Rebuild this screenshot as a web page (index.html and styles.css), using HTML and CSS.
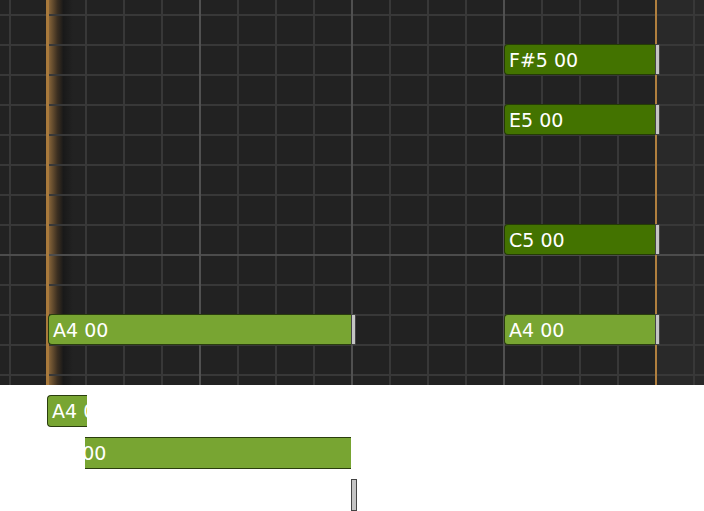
FILE: index.html
```html
<!DOCTYPE html>
<html lang="en">
<head>
    <meta charset="UTF-8">
    <meta name="viewport" content="width=device-width, initial-scale=1.0">
    <title>Piano Roll</title>
    <link rel="stylesheet" href="styles.css">
</head>
<body>
    <div class="roll">
        <div class="playhead"></div>
        <div class="loop-end"></div>

        <div class="note dark" style="left:504px; top:44px; width:156px;">
            <div class="note-body">F#5 00</div>
            <div class="note-handle"></div>
        </div>
        <div class="note dark" style="left:504px; top:104px; width:156px;">
            <div class="note-body">E5 00</div>
            <div class="note-handle"></div>
        </div>
        <div class="note dark" style="left:504px; top:224px; width:156px;">
            <div class="note-body">C5 00</div>
            <div class="note-handle"></div>
        </div>
        <div class="note" style="left:48px; top:314px; width:308px;">
            <div class="note-body">A4 00</div>
            <div class="note-handle"></div>
        </div>
        <div class="note" style="left:504px; top:314px; width:156px;">
            <div class="note-body">A4 00</div>
            <div class="note-handle"></div>
        </div>
    </div>

    <!-- drag preview, split into its three slices -->
    <div class="ghost">
        <div class="ghost-cap"><span>A4 00</span></div>
        <div class="ghost-mid"><span>A4 00</span></div>
        <div class="ghost-handle"></div>
    </div>
</body>
</html>
```

FILE: styles.css
```css
body {
    margin: 0;
    background: #ffffff;
    font-family: "DejaVu Sans", Verdana, sans-serif;
}

.roll {
    position: relative;
    height: 385px;
    overflow: hidden;
    background-color: #222222;
    background-image:
        /* major bar lines */
        repeating-linear-gradient(to right, #505050 0 2px, transparent 2px 152px),
        /* octave line */
        linear-gradient(to bottom, transparent 254px, #4c4c4c 254px 256px, transparent 256px),
        /* beat lines */
        repeating-linear-gradient(to right, #383838 0 2px, transparent 2px 38px),
        /* row lines */
        repeating-linear-gradient(to bottom, #383838 0 2px, transparent 2px 30px),
        /* playhead shadow */
        linear-gradient(to right, rgba(150, 110, 60, 0.85), rgba(70, 52, 32, 0.7) 35%, rgba(22, 22, 22, 0.75) 60%, rgba(26, 26, 26, 0)),
        /* past loop end */
        linear-gradient(to right, transparent 657px, #292929 657px);
    background-size:
        100% 100%,
        100% 100%,
        100% 100%,
        100% 100%,
        24px 100%,
        100% 100%;
    background-position:
        47px 0,
        0 0,
        9px 0,
        0 14px,
        49px 0,
        0 0;
    background-repeat:
        repeat-x,
        no-repeat,
        repeat-x,
        repeat-y,
        no-repeat,
        no-repeat;
}

.playhead {
    position: absolute;
    left: 46px;
    top: 0;
    bottom: 0;
    width: 3px;
    background: #a97a3c;
}

.loop-end {
    position: absolute;
    left: 655px;
    top: 0;
    bottom: 0;
    width: 2px;
    background: #b07f3e;
}

.note {
    position: absolute;
    display: flex;
    height: 31px;
}

.note-body {
    flex: 1;
    box-sizing: border-box;
    padding-left: 4px;
    border: 1px solid #2a3d0e;
    border-right: none;
    border-radius: 4px 0 0 4px;
    background: #78a532;
    color: #ffffff;
    font-size: 19px;
    line-height: 31px;
    white-space: nowrap;
    overflow: hidden;
}

.note.dark .note-body {
    background: #437300;
    border-color: #253c05;
}

.note-handle {
    width: 5px;
    box-sizing: border-box;
    border: 1px solid #444444;
    background: #c4c4c4;
}

.ghost {
    display: flex;
    flex-direction: column;
    gap: 10px;
    padding-top: 10px;
}

.ghost-cap,
.ghost-mid {
    box-sizing: border-box;
    height: 32px;
    overflow: hidden;
    background: #78a532;
    color: #ffffff;
    font-size: 19px;
    line-height: 31px;
    white-space: nowrap;
    border: 1px solid #2a3d0e;
}

.ghost-cap {
    margin-left: 47px;
    width: 40px;
    padding-left: 4px;
    border-right: none;
    border-radius: 4px 0 0 4px;
}

.ghost-mid {
    margin-left: 85px;
    width: 266px;
    border-left: none;
    border-right: none;
}

.ghost-mid span {
    margin-left: -34px;
}

.ghost-handle {
    margin-left: 351px;
    width: 6px;
    height: 32px;
    box-sizing: border-box;
    border: 1px solid #444444;
    background: #c4c4c4;
}
```
